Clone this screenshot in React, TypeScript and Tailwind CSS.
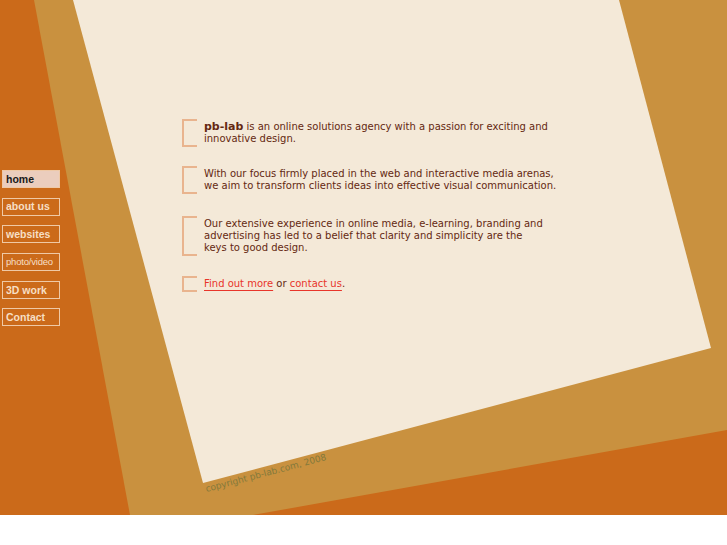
import React from 'react';

const navItems = [
  { label: 'home', active: true },
  { label: 'about us' },
  { label: 'websites' },
  { label: 'photo/video', small: true },
  { label: '3D work' },
  { label: 'Contact' },
];

const Bracket: React.FC<{ children: React.ReactNode; className?: string }> = ({ children, className = '' }) => (
  <div className={`flex items-stretch ${className}`}>
    <div className="w-[15px] border-2 border-r-0 border-[#e9b48e] shrink-0" />
    <div className="pl-[7px] py-[2px] whitespace-nowrap">{children}</div>
  </div>
);

const App: React.FC = () => {
  return (
    <div className="relative w-[727px] h-[515px] overflow-hidden bg-[#cb6a1a]">
      {/* background sheets */}
      <svg className="absolute inset-0" width="727" height="515" viewBox="0 0 727 515">
        <polygon points="34,0 727,0 727,430 253,515 130,515" fill="#c9913f" />
        <polygon points="73,0 619,0 711,348 203,483" fill="#f4e9d8" />
      </svg>

      <div className="relative flex">
        <nav className="flex flex-col gap-[9.7px] pt-[170px] pl-[2px] w-[60px]">
          {navItems.map((item) => (
            <a
              key={item.label}
              href="#"
              className={`flex items-center h-[18px] w-[58px] border border-[#efc9a6] pl-[3px] font-['Liberation_Sans',Arial,sans-serif] leading-none ${
                item.active ? 'bg-[#ebcdbd] text-[#1a1a1a]' : 'text-[#f6dfc5]'
              } ${item.small ? 'text-[9.5px] tracking-[-0.2px]' : 'text-[10.5px] font-bold'}`}
            >
              {item.label}
            </a>
          ))}
        </nav>

        <main className="ml-[122px] pt-[119px] flex flex-col font-['DejaVu_Sans',sans-serif] text-[10px] leading-[12px] text-[#642811]">
          <Bracket>
            <span className="font-bold text-[11px]">pb-lab</span> is an online solutions agency with a passion for exciting and
            <br />
            innovative design.
          </Bracket>
          <Bracket className="mt-[19px]">
            With our focus firmly placed in the web and interactive media arenas,
            <br />
            we aim to transform clients ideas into effective visual communication.
          </Bracket>
          <Bracket className="mt-[22px]">
            Our extensive experience in online media, e-learning, branding and
            <br />
            advertising has led to a belief that clarity and simplicity are the
            <br />
            keys to good design.
          </Bracket>
          <Bracket className="mt-[20px]">
            <a href="#" className="text-[#e8352a] underline underline-offset-[3px]">Find out more</a> or{' '}
            <a href="#" className="text-[#e8352a] underline underline-offset-[3px]">contact us</a>.
          </Bracket>
        </main>
      </div>

      <div className="absolute left-[207px] top-[485px] origin-bottom-left -rotate-[15deg] font-['DejaVu_Sans',sans-serif] text-[9px] leading-none text-[#83793c] whitespace-nowrap">
        copyright pb-lab.com, 2008
      </div>
    </div>
  );
};

export default App;
